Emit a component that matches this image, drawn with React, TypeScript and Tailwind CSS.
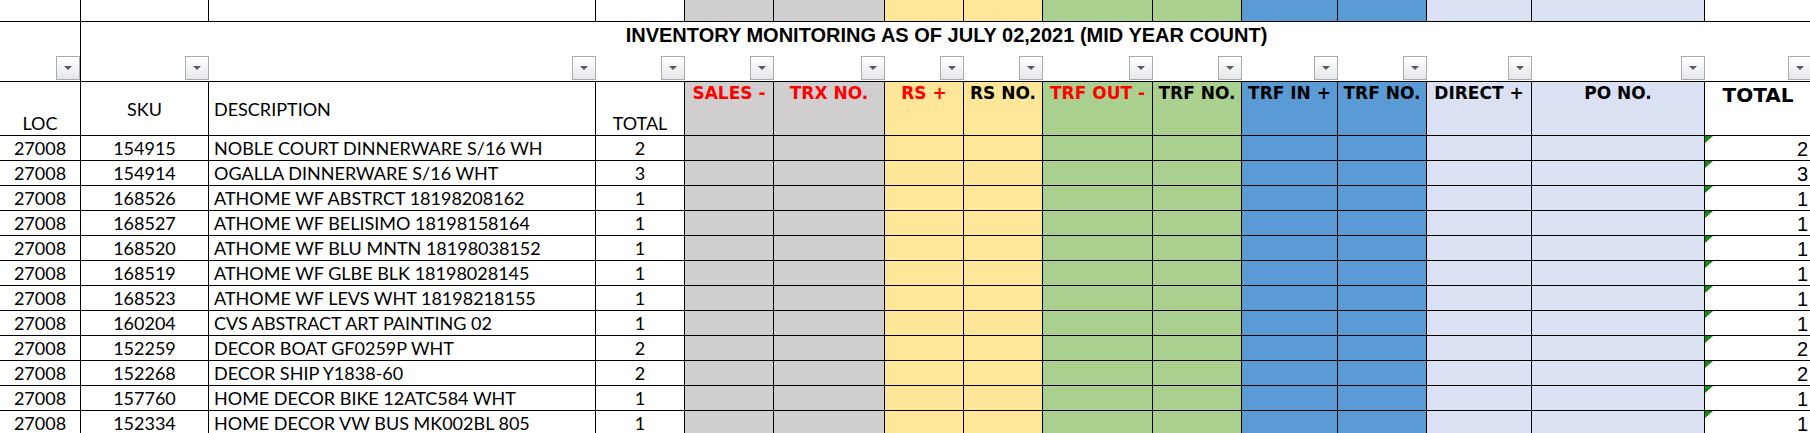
const GRID =
  "grid grid-cols-[81px_128px_387px_89px_89px_111px_79px_79px_110px_89px_96px_89px_105px_173px_107px]";

const BG = [
  "bg-white",
  "bg-white",
  "bg-white",
  "bg-white",
  "bg-[#d0cece]",
  "bg-[#d0cece]",
  "bg-[#ffe699]",
  "bg-[#ffe699]",
  "bg-[#a9d08e]",
  "bg-[#a9d08e]",
  "bg-[#5b9bd5]",
  "bg-[#5b9bd5]",
  "bg-[#d9e1f2]",
  "bg-[#d9e1f2]",
  "bg-white",
];

const CAL = "font-['Lato',sans-serif] text-[18px] text-black";
const TAH = "font-['DejaVu_Sans',sans-serif] font-bold";

const heads = [
  { t: "SALES -", red: true },
  { t: "TRX NO.", red: true },
  { t: "RS +", red: true },
  { t: "RS NO.", red: false },
  { t: "TRF OUT -", red: true },
  { t: "TRF NO.", red: false },
  { t: "TRF IN +", red: false },
  { t: "TRF NO.", red: false },
  { t: "DIRECT +", red: false },
  { t: "PO NO.", red: false },
];

const rows = [
  ["27008", "154915", "NOBLE COURT DINNERWARE S/16 WH", "2"],
  ["27008", "154914", "OGALLA DINNERWARE S/16 WHT", "3"],
  ["27008", "168526", "ATHOME WF ABSTRCT 18198208162", "1"],
  ["27008", "168527", "ATHOME WF BELISIMO 18198158164", "1"],
  ["27008", "168520", "ATHOME WF BLU MNTN 18198038152", "1"],
  ["27008", "168519", "ATHOME WF GLBE BLK 18198028145", "1"],
  ["27008", "168523", "ATHOME WF LEVS WHT 18198218155", "1"],
  ["27008", "160204", "CVS ABSTRACT ART PAINTING 02", "1"],
  ["27008", "152259", "DECOR BOAT GF0259P WHT", "2"],
  ["27008", "152268", "DECOR SHIP Y1838-60", "2"],
  ["27008", "157760", "HOME DECOR BIKE 12ATC584 WHT", "1"],
  ["27008", "152334", "HOME DECOR VW BUS MK002BL 805", "1"],
];

function FilterBtn() {
  return (
    <div className="w-[24px] h-[24px] border border-[#ababab] bg-gradient-to-b from-white to-[#e4e7eb] flex items-center justify-center">
      <div className="w-0 h-0 border-l-[4px] border-r-[4px] border-t-[4px] border-l-transparent border-r-transparent border-t-[#5a5a5a]" />
    </div>
  );
}

export default function App() {
  return (
    <div className="w-[1810px] h-[433px] overflow-hidden bg-white">
      {/* top row, mostly hidden */}
      <div className={GRID}>
        {BG.map((bg, i) => (
          <div key={i} className={`h-[22px] border-r border-b border-black ${bg}`} />
        ))}
      </div>

      {/* title + filter buttons */}
      <div className={`${GRID} grid-rows-[33px_26px] h-[60px] border-b border-black`}>
        <div className="row-span-2 border-r border-black flex items-end justify-end pb-[1px]">
          <FilterBtn />
        </div>
        <div className="col-span-14 flex justify-center pt-[3px]">
          <span className="font-['Liberation_Sans',Arial,sans-serif] font-bold text-[20px] leading-none text-black whitespace-nowrap">
            INVENTORY MONITORING AS OF JULY 02,2021 (MID YEAR COUNT)
          </span>
        </div>
        {BG.slice(1).map((_, i) => (
          <div key={i} className="flex items-end justify-end pb-[1px]">
            <FilterBtn />
          </div>
        ))}
      </div>

      {/* header row */}
      <div className={GRID}>
        <div className={`h-[54px] border-r border-b border-black flex items-end justify-center leading-[24px] ${CAL}`}>LOC</div>
        <div className={`h-[54px] border-r border-b border-black flex items-center justify-center leading-[24px] ${CAL}`}>SKU</div>
        <div className={`h-[54px] border-r border-b border-black flex items-center pl-[5px] leading-[24px] ${CAL}`}>DESCRIPTION</div>
        <div className={`h-[54px] border-r border-b border-black flex items-end justify-center leading-[24px] ${CAL}`}>TOTAL</div>
        {heads.map((h, i) => (
          <div
            key={i}
            className={`h-[54px] border-r border-b border-black ${BG[i + 4]} flex justify-center pt-[3px] whitespace-nowrap ${TAH} text-[17px] leading-none ${h.red ? "text-[#ff0000]" : "text-black"}`}
          >
            {h.t}
          </div>
        ))}
        <div className={`h-[54px] border-r border-b border-black flex justify-center pt-[3px] ${TAH} text-[20px] leading-none text-black`}>
          TOTAL
        </div>
      </div>

      {/* data rows */}
      {rows.map((r, ri) => (
        <div key={ri} className={GRID}>
          <div className={`h-[25px] border-r border-b border-black text-center leading-[24px] ${CAL}`}>{r[0]}</div>
          <div className={`h-[25px] border-r border-b border-black text-center leading-[24px] ${CAL}`}>{r[1]}</div>
          <div className={`h-[25px] border-r border-b border-black pl-[5px] leading-[24px] whitespace-nowrap ${CAL}`}>{r[2]}</div>
          <div className={`h-[25px] border-r border-b border-black text-center leading-[24px] ${CAL}`}>{r[3]}</div>
          {BG.slice(4, 14).map((bg, i) => (
            <div key={i} className={`h-[25px] border-r border-b border-black ${bg}`} />
          ))}
          <div className="relative h-[25px] border-r border-b border-black overflow-hidden text-right pr-[3px] font-['Liberation_Sans',Arial,sans-serif] text-[20px] leading-[27px] text-black">
            <div className="absolute top-0 left-0 w-0 h-0 border-t-[7px] border-r-[8px] border-t-[#108a10] border-r-transparent" />
            {r[3]}
          </div>
        </div>
      ))}
    </div>
  );
}
